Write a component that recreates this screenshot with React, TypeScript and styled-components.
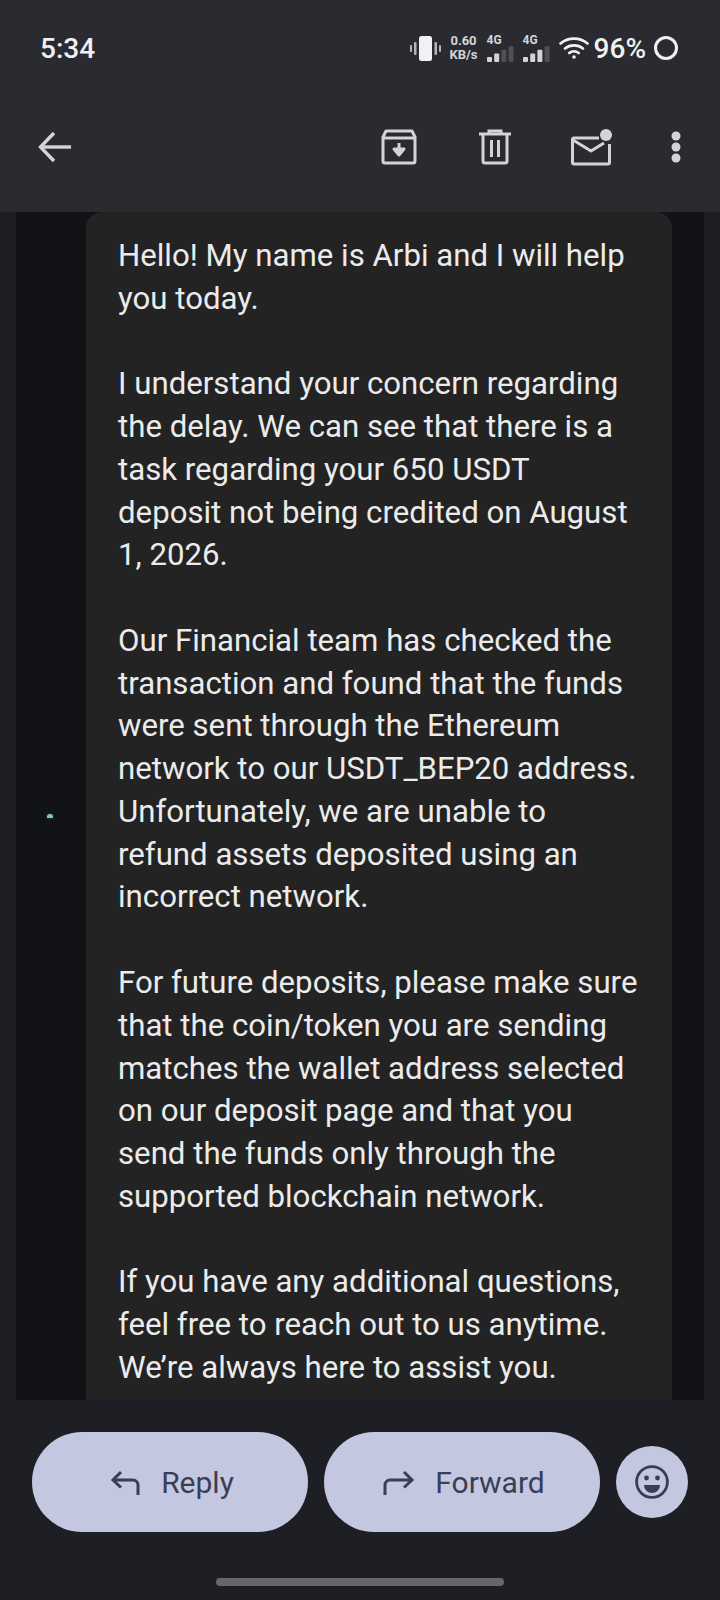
import React from "react";
import styled, { createGlobalStyle } from "styled-components";

const Global = createGlobalStyle`
  html, body { margin: 0; padding: 0; background: #1e1f24; }
  * { box-sizing: border-box; }
`;

const Screen = styled.div`
  width: 720px;
  height: 1600px;
  display: flex;
  flex-direction: column;
  background: #1e1f24;
  font-family: Roboto, "Liberation Sans", sans-serif;
  overflow: hidden;
`;

const Header = styled.header`
  height: 212px;
  background: #2a2b30;
  display: flex;
  flex-direction: column;
`;

const StatusBar = styled.div`
  height: 96px;
  display: flex;
  align-items: center;
  padding: 0 42px 0 40px;
  color: #f1f1f3;
`;

const Clock = styled.span`
  font-size: 28px;
  font-weight: 500;
  margin-right: auto;
`;

const SpeedText = styled.span`
  font-size: 13px;
  font-weight: 700;
  line-height: 14px;
  text-align: center;
  color: #d4d4d8;
  margin: 0 9px 0 8px;
`;

const Signal = styled.div`
  width: 30px;
  margin-right: 6px;
  display: flex;
  flex-direction: column;
  color: #d4d4d8;
`;

const SignalLabel = styled.span`
  font-size: 12px;
  font-weight: 700;
  line-height: 12px;
`;

const Battery = styled.span`
  font-size: 28px;
  font-weight: 500;
  margin: 0 8px 0 5px;
`;

const Toolbar = styled.div`
  height: 116px;
  padding: 0 0 14px 38px;
  display: flex;
  align-items: center;
  color: #d4d4d7;
`;

const ToolGroup = styled.div`
  margin-left: auto;
  display: flex;
  align-items: center;
`;

const Tool = styled.div<{ $w: number; $gap: number }>`
  width: ${(p) => p.$w}px;
  margin-left: ${(p) => p.$gap}px;
  display: flex;
`;

const Strip = styled.main`
  position: relative;
  height: 1188px;
  margin: 0 16px;
  background: #121316;
  display: flex;
  overflow: hidden;
`;

const Card = styled.article`
  flex: 1;
  margin: 0 32px 0 70px;
  background: #232323;
  border-radius: 16px 16px 0 0;
  padding: 23px 0 0 32px;
  color: #ebebec;
  font-size: 31.2px;
  line-height: 42.77px;
`;

const Paragraph = styled.p`
  margin: 0 0 42.77px;
`;

const Line = styled.span`
  display: block;
  white-space: nowrap;
`;

const GreenDot = styled.span`
  position: absolute;
  left: 31px;
  top: 602px;
  width: 6px;
  height: 4px;
  border-radius: 3px 3px 0 0;
  background: #94c4a2;
  box-shadow: 0 0 3px #1f6a3b;
`;

const Footer = styled.footer`
  flex: 1;
  position: relative;
  display: flex;
  flex-direction: column;
  align-items: center;
  padding-top: 32px;
`;

const ActionRow = styled.div`
  width: 100%;
  padding: 0 32px;
  display: flex;
  align-items: center;
  gap: 16px;
`;

const ActionButton = styled.button`
  width: 276px;
  height: 100px;
  border: 0;
  border-radius: 50px;
  background: #c3c7df;
  color: #3a3e55;
  display: flex;
  align-items: center;
  justify-content: center;
  gap: 20px;
  font-family: inherit;
  font-size: 30px;
  font-weight: 400;
  padding: 0 0 0 4px;
`;

const EmojiButton = styled.button`
  width: 72px;
  height: 72px;
  border: 0;
  border-radius: 50%;
  background: #c3c7df;
  color: #3a3e55;
  display: flex;
  align-items: center;
  justify-content: center;
  padding: 0;
`;

const HomeBar = styled.div`
  width: 288px;
  height: 8px;
  border-radius: 4px;
  background: #66676b;
  margin-top: 46px;
`;

const paragraphs = [
  ["Hello! My name is Arbi and I will help", "you today."],
  [
    "I understand your concern regarding",
    "the delay. We can see that there is a",
    "task regarding your 650 USDT",
    "deposit not being credited on August",
    "1, 2026.",
  ],
  [
    "Our Financial team has checked the",
    "transaction and found that the funds",
    "were sent through the Ethereum",
    "network to our USDT_BEP20 address.",
    "Unfortunately, we are unable to",
    "refund assets deposited using an",
    "incorrect network.",
  ],
  [
    "For future deposits, please make sure",
    "that the coin/token you are sending",
    "matches the wallet address selected",
    "on our deposit page and that you",
    "send the funds only through the",
    "supported blockchain network.",
  ],
  [
    "If you have any additional questions,",
    "feel free to reach out to us anytime.",
    "We’re always here to assist you.",
  ],
];

const Vibrate = () => (
  <svg width="31" height="25" viewBox="0 0 31 25" fill="currentColor">
    <rect x="9" y="0" width="13" height="25" rx="2.5" />
    <rect x="4" y="6" width="2.5" height="13" rx="1" opacity=".7" />
    <rect x="0" y="9" width="2" height="7" rx="1" opacity=".7" />
    <rect x="24.5" y="6" width="2.5" height="13" rx="1" opacity=".7" />
    <rect x="29" y="9" width="2" height="7" rx="1" opacity=".7" />
  </svg>
);

const Bars = ({ lit }: { lit: number }) => (
  <svg width="30" height="16" viewBox="0 0 30 16" fill="currentColor">
    {[0, 1, 2, 3].map((i) => {
      const h = 5 + i * 3.6;
      return <rect key={i} x={i * 7.2} y={16 - h} width="5" height={h} rx="1" opacity={i < lit ? 1 : 0.22} />;
    })}
  </svg>
);

const Wifi = () => (
  <svg width="30" height="24" viewBox="0 0 30 24" fill="none" stroke="currentColor" strokeWidth="2.6" strokeLinecap="round">
    <path d="M1.5 7.5C9 1 21 1 28.5 7.5" />
    <path d="M6 12.5C11 8.3 19 8.3 24 12.5" />
    <path d="M10.2 17C13 14.8 17 14.8 19.8 17" />
    <circle cx="15" cy="21" r="1.8" fill="currentColor" stroke="none" />
  </svg>
);

const BatteryRing = () => (
  <svg width="24" height="24" viewBox="0 0 24 24" fill="none" stroke="currentColor" strokeWidth="3">
    <circle cx="12" cy="12" r="10.5" />
  </svg>
);

const BackArrow = () => (
  <svg width="34" height="32" viewBox="0 0 34 32" fill="none" stroke="currentColor" strokeWidth="3.4">
    <path d="M33 16H3" />
    <path d="M16 2L2.5 16L16 30" />
  </svg>
);

const ArchiveIcon = () => (
  <svg width="36" height="36" viewBox="0 0 36 36" fill="none" stroke="currentColor" strokeWidth="3" strokeLinejoin="round">
    <path d="M5 2h26l3 6v24a2 2 0 0 1-2 2H4a2 2 0 0 1-2-2V8z" />
    <path d="M2 9h32" />
    <path d="M18 14v11" />
    <path d="M13 20l5 6 5-6z" fill="currentColor" />
  </svg>
);

const TrashIcon = () => (
  <svg width="32" height="36" viewBox="0 0 32 36" fill="none" stroke="currentColor" strokeWidth="3">
    <path d="M0 5h32" />
    <path d="M10 5V2h12v3" />
    <path d="M4 5v27a2 2 0 0 0 2 2h20a2 2 0 0 0 2-2V5" />
    <path d="M12.5 11v17M19.5 11v17" />
  </svg>
);

const MailDotIcon = () => (
  <svg width="42" height="37" viewBox="0 0 42 37" fill="none" stroke="currentColor" strokeWidth="3" strokeLinejoin="round">
    <path d="M28 9H3a1.5 1.5 0 0 0-1.5 1.5v23A1.5 1.5 0 0 0 3 35h34a1.5 1.5 0 0 0 1.5-1.5V15" />
    <path d="M2 11l18 11 13-8" />
    <circle cx="35" cy="6" r="6" fill="currentColor" stroke="none" />
  </svg>
);

const MoreIcon = () => (
  <svg width="10" height="32" viewBox="0 0 10 32" fill="currentColor">
    <circle cx="5" cy="5" r="4.5" />
    <circle cx="5" cy="16" r="4.5" />
    <circle cx="5" cy="27" r="4.5" />
  </svg>
);

const ReplyIcon = () => (
  <svg width="31" height="26" viewBox="0 0 31 26" fill="none" stroke="currentColor" strokeWidth="3">
    <path d="M11 3L3 11l8 7.5" />
    <path d="M3 11h20a5 5 0 0 1 5 5v10" />
  </svg>
);

const ForwardIcon = () => (
  <svg width="32" height="26" viewBox="0 0 32 26" fill="none" stroke="currentColor" strokeWidth="3">
    <path d="M21 3l8 8-8 7.5" />
    <path d="M29 11H7a5 5 0 0 0-5 5v10" />
  </svg>
);

const SmileIcon = () => (
  <svg width="34" height="34" viewBox="0 0 34 34" fill="none" stroke="currentColor" strokeWidth="2.8">
    <circle cx="17" cy="17" r="15.4" />
    <circle cx="11.5" cy="13" r="2.4" fill="currentColor" stroke="none" />
    <circle cx="22.5" cy="13" r="2.4" fill="currentColor" stroke="none" />
    <path d="M9 20h16a8 8 0 0 1-16 0z" fill="currentColor" stroke="none" />
  </svg>
);

export default function App() {
  return (
    <Screen>
      <Global />
      <Header>
        <StatusBar>
          <Clock>5:34</Clock>
          <Vibrate />
          <SpeedText>
            0.60
            <br />
            KB/s
          </SpeedText>
          <Signal>
            <SignalLabel>4G</SignalLabel>
            <Bars lit={2} />
          </Signal>
          <Signal>
            <SignalLabel>4G</SignalLabel>
            <Bars lit={3} />
          </Signal>
          <Wifi />
          <Battery>96%</Battery>
          <BatteryRing />
        </StatusBar>
        <Toolbar>
          <BackArrow />
          <ToolGroup>
            <Tool $w={36} $gap={0}>
              <ArchiveIcon />
            </Tool>
            <Tool $w={32} $gap={62}>
              <TrashIcon />
            </Tool>
            <Tool $w={42} $gap={60}>
              <MailDotIcon />
            </Tool>
            <Tool $w={10} $gap={58}>
              <MoreIcon />
            </Tool>
            <Tool $w={39} $gap={0} />
          </ToolGroup>
        </Toolbar>
      </Header>
      <Strip>
        <GreenDot />
        <Card>
          {paragraphs.map((lines, i) => (
            <Paragraph key={i}>
              {lines.map((l) => (
                <Line key={l}>{l}</Line>
              ))}
            </Paragraph>
          ))}
        </Card>
      </Strip>
      <Footer>
        <ActionRow>
          <ActionButton>
            <ReplyIcon />
            Reply
          </ActionButton>
          <ActionButton>
            <ForwardIcon />
            Forward
          </ActionButton>
          <EmojiButton>
            <SmileIcon />
          </EmojiButton>
        </ActionRow>
        <HomeBar />
      </Footer>
    </Screen>
  );
}
